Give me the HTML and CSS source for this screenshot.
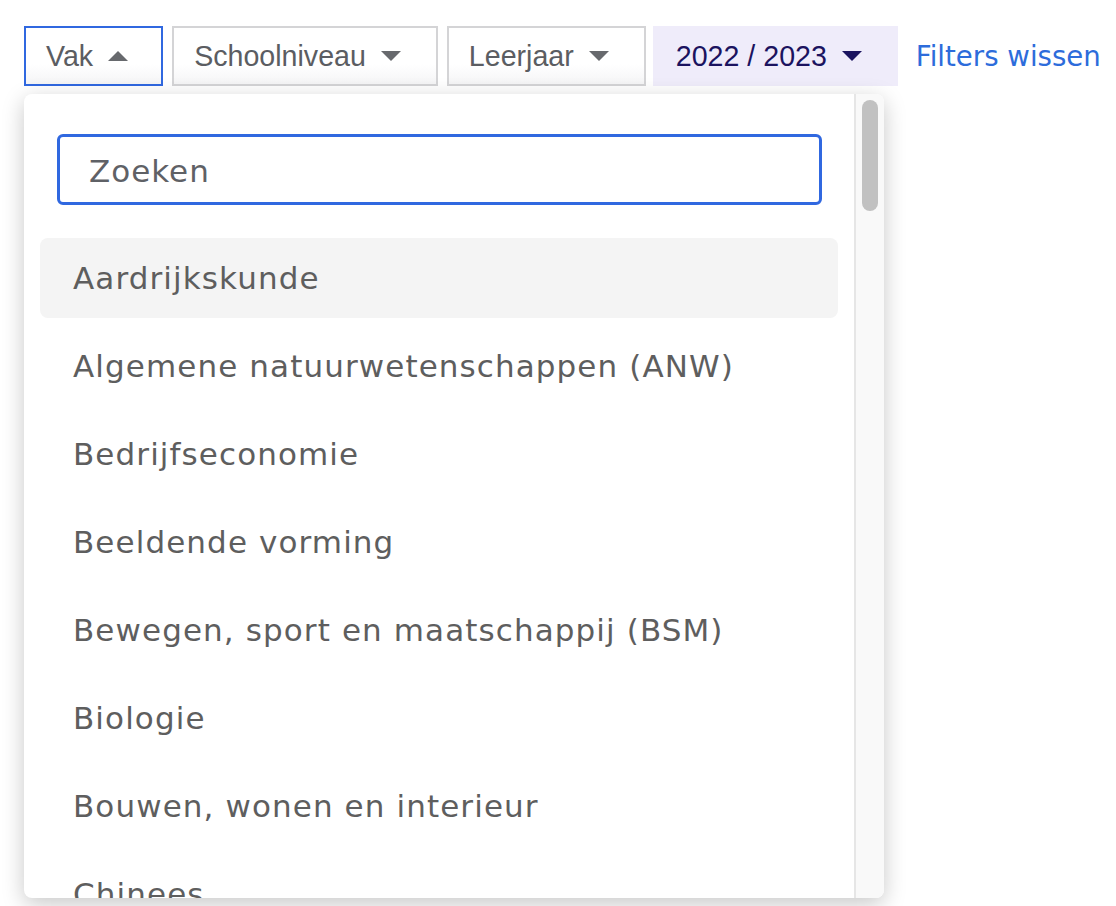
FILE: index.html
```html
<!DOCTYPE html>
<html lang="nl">
	<head>
		<meta charset="UTF-8" />
		<title>Filters</title>
		<link rel="stylesheet" href="styles.css">
	</head>
	<body>
		<div class="page">
			<div class="filters">
				<button class="filter filter-open">
					Vak
					<svg class="caret" width="20" height="10" viewBox="0 0 20 10"><polygon points="0,10 10,0 20,10" /></svg>
				</button>
				<button class="filter">
					Schoolniveau
					<svg class="caret" width="20" height="10" viewBox="0 0 20 10"><polygon points="0,0 20,0 10,10" /></svg>
				</button>
				<button class="filter">
					Leerjaar
					<svg class="caret" width="20" height="10" viewBox="0 0 20 10"><polygon points="0,0 20,0 10,10" /></svg>
				</button>
				<button class="filter filter-year">
					2022 / 2023
					<svg class="caret" width="20" height="10" viewBox="0 0 20 10"><polygon points="0,0 20,0 10,10" /></svg>
				</button>
				<a class="clear" href="#">Filters wissen</a>
			</div>

			<div class="dropdown">
				<div class="dropdown-body">
					<div class="search">
						<input type="text" placeholder="Zoeken" />
					</div>
					<ul class="options">
						<li class="active">Aardrijkskunde</li>
						<li>Algemene natuurwetenschappen (ANW)</li>
						<li>Bedrijfseconomie</li>
						<li>Beeldende vorming</li>
						<li>Bewegen, sport en maatschappij (BSM)</li>
						<li>Biologie</li>
						<li>Bouwen, wonen en interieur</li>
						<li>Chinees</li>
					</ul>
				</div>
				<div class="scrollbar">
					<div class="thumb"></div>
				</div>
			</div>
		</div>
	</body>
</html>
```

FILE: styles.css
```css
body {
	margin: 0;
	background: white;
	font-family: "Liberation Sans", Arial, sans-serif;
}

.page {
	position: relative;
	height: 906px;
	overflow: hidden;
}

.filters {
	display: flex;
	align-items: center;
	gap: 9px;
	padding: 26px 0 0 24px;
	white-space: nowrap;
}

.filter {
	display: flex;
	align-items: center;
	flex-shrink: 0;
	gap: 15px;
	height: 60px;
	box-sizing: border-box;
	padding: 0 35px 0 20px;
	border: 2px solid #d4d4d6;
	background: linear-gradient(#fff 65%, #f5f5f6);
	color: #5b5d62;
	font-family: "Liberation Sans", Arial, sans-serif;
	font-size: 28.6px;
}

.caret {
	fill: #67696d;
}

.filter-open {
	border-color: #3068e0;
	padding-right: 33px;
}

.filter-year {
	border-color: #efecfa;
	background: #efecfa;
	color: #1b135f;
	padding-right: 34px;
	margin-left: -2px;
	padding-left: 21px;
}

.filter-year .caret {
	fill: #1b135f;
}

.clear {
	margin-left: 9px;
	color: #2d6cdb;
	text-decoration: none;
	font-family: "DejaVu Sans", sans-serif;
	font-size: 27.6px;
}

.dropdown {
	position: absolute;
	left: 24px;
	top: 94px;
	z-index: 2;
	width: 860px;
	height: 804px;
	display: flex;
	background: white;
	border-radius: 8px;
	box-shadow: 0 6px 22px rgba(0, 0, 0, 0.22);
	overflow: hidden;
}

.dropdown-body {
	flex: 1;
	padding: 40px 16px 0;
	overflow: hidden;
}

.search {
	padding: 0 16px 0 17px;
}

.search input {
	display: block;
	width: 100%;
	height: 71px;
	box-sizing: border-box;
	padding: 2px 29px 0;
	border: 3px solid #3068e0;
	border-radius: 6px;
	outline: none;
	font-family: "DejaVu Sans", sans-serif;
	font-size: 31px;
	letter-spacing: 1px;
	color: #555;
}

.search input::placeholder {
	color: #5f6166;
}

.options {
	list-style: none;
	margin: 33px 0 0;
	padding: 0;
}

.options li {
	display: flex;
	align-items: center;
	height: 80px;
	margin-bottom: 8px;
	padding-left: 33px;
	border-radius: 8px;
	color: #5e5e5e;
	font-family: "DejaVu Sans", sans-serif;
	font-size: 31px;
	letter-spacing: 1.1px;
}

.options li.active {
	background: #f4f4f4;
}

.scrollbar {
	flex-shrink: 0;
	width: 28px;
	border-left: 2px solid #e6e6e6;
	background: #f9f9f9;
	padding-top: 6px;
	display: flex;
	justify-content: center;
	align-items: flex-start;
}

.thumb {
	width: 16px;
	height: 111px;
	border-radius: 8px;
	background: #c1c1c1;
}
```
